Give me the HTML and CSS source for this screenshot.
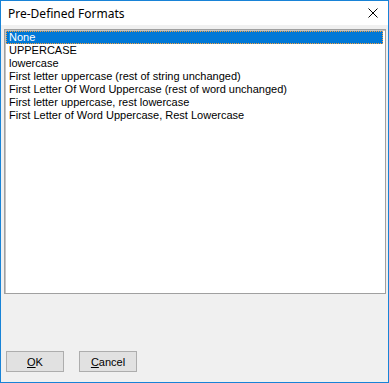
FILE: index.html
```html
<!DOCTYPE html>
<html>
  <head>
    <title>Pre-Defined Formats</title>
    <meta charset="utf-8">
    <link rel="stylesheet" href="styles.css">
  </head>
<body>
<div class="window">
  <div class="titlebar">
    <span class="title">Pre-Defined Formats</span>
    <span class="close">
      <svg width="10" height="10" viewBox="0 0 10 10"><path d="M0.5 0.5L9.5 9.5M9.5 0.5L0.5 9.5" stroke="#000" stroke-width="1"/></svg>
    </span>
  </div>
  <div class="client">
    <div class="listbox">
      <div class="item selected">None</div>
      <div class="item">UPPERCASE</div>
      <div class="item">lowercase</div>
      <div class="item">First letter uppercase (rest of string unchanged)</div>
      <div class="item">First Letter Of Word Uppercase (rest of word unchanged)</div>
      <div class="item">First letter uppercase, rest lowercase</div>
      <div class="item">First Letter of Word Uppercase, Rest Lowercase</div>
    </div>
    <div class="buttons">
      <button><u>O</u>K</button>
      <button><u>C</u>ancel</button>
    </div>
  </div>
</div>
</body>
</html>
```

FILE: styles.css
```css
body {
  margin: 0;
  padding: 0;
  font-family: "Liberation Sans", Arial, sans-serif;
  font-size: 11px;
}
.window {
  width: 389px;
  height: 383px;
  box-sizing: border-box;
  border: 1px solid #1883d7;
  display: flex;
  flex-direction: column;
  background-color: #f0f0f0;
}
.titlebar {
  height: 24px;
  background-color: #fff;
  display: flex;
  align-items: center;
  justify-content: space-between;
}
.title {
  font-family: "Noto Sans", "Open Sans", sans-serif;
  font-size: 12px;
  padding-left: 7px;
  color: #000;
}
.close {
  display: flex;
  width: 10px;
  height: 10px;
  margin-right: 10px;
}
.client {
  flex: 1;
  display: flex;
  flex-direction: column;
  padding: 4px 2px 10px 3px;
}
.listbox {
  height: 265px;
  box-sizing: border-box;
  background-color: #fff;
  border: 1px solid #a0a0a0;
  box-shadow: inset 1px 1px 0 #c4c4c4;
  padding: 1px 2px 1px 1px;
}
.item {
  height: 13px;
  line-height: 13px;
  padding-left: 3px;
  white-space: nowrap;
  color: #000;
}
.item.selected {
  background-color: #0078d7;
  color: #fff;
  outline: 1px dotted #f5a03c;
  outline-offset: -1px;
}
.buttons {
  margin-top: auto;
  display: flex;
  gap: 15px;
  padding-left: 2px;
}
button {
  width: 58px;
  height: 21px;
  box-sizing: border-box;
  border: 1px solid #adadad;
  background-color: #e1e1e1;
  font-family: "Liberation Sans", Arial, sans-serif;
  font-size: 11px;
  color: #000;
  padding: 0;
}
```
